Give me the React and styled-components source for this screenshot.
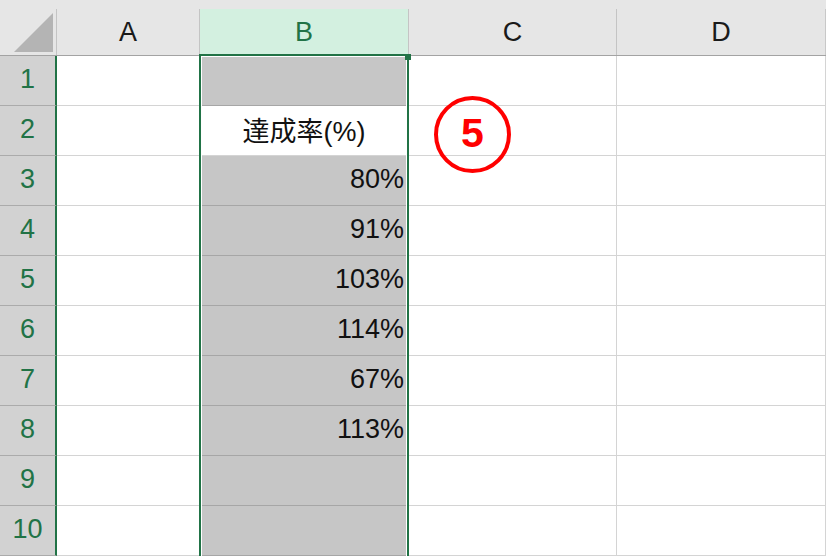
import styled, { createGlobalStyle } from "styled-components";

const GlobalStyle = createGlobalStyle`
    html, body{
        margin:0;
        padding:0;
        background:#ffffff;
    }
    body{
        font-family: "Liberation Sans", "Noto Sans CJK JP", sans-serif;
    }
`

const GREEN = "#217346";

const Sheet = styled.div`
    position:relative;
    width:826px;
    height:556px;
    overflow:hidden;
    display:grid;
    grid-template-columns: 57px 143px 209px 208px 209px;
    grid-template-rows: 56px repeat(10, 50px);
    background:#ffffff;
`

const HeaderCell = styled.div`
    box-sizing:border-box;
    padding-top:9px;
    background:#e6e6e6;
    border-bottom:1px solid #a3a3a3;
`

const HeaderLabel = styled.div`
    box-sizing:border-box;
    height:100%;
    display:flex;
    align-items:center;
    justify-content:center;
    background:${p => p.$active ? "#d3f0e0" : "#e6e6e6"};
    color:${p => p.$active ? GREEN : "#1a1a1a"};
    border-right:1px solid ${p => p.$last ? "#c8c8c8" : "#c4c4c4"};
    font-size:27px;
`

const Corner = styled.svg`
    display:block;
    width:56px;
    height:46px;
    border-right:1px solid #c4c4c4;
`

const RowHead = styled.div`
    box-sizing:border-box;
    display:flex;
    align-items:center;
    justify-content:center;
    background:#d2d2d2;
    color:${GREEN};
    border-bottom:1px solid #ababab;
    border-right:2px solid ${GREEN};
    font-size:27px;
    padding-bottom:2px;
`

const Cell = styled.div`
    box-sizing:border-box;
    display:flex;
    align-items:center;
    justify-content:${p => p.$center ? "center" : "flex-end"};
    padding:0 4px 3px 0;
    background:${p => p.$selected ? "#c6c6c6" : "#ffffff"};
    border-right:1px solid #d4d4d4;
    border-bottom:1px solid ${p => p.$selected ? "#a6a6a6" : "#d4d4d4"};
    color:#111111;
    font-size:27px;
    ${p => p.$center ? "padding-right:0;" : ""}
`

const Selection = styled.div`
    position:absolute;
    left:199px;
    top:54px;
    width:210px;
    height:510px;
    box-sizing:border-box;
    border:2px solid ${GREEN};
    box-shadow: inset 0 0 0 1px #ffffff;
    pointer-events:none;
`

const Handle = styled.div`
    position:absolute;
    right:-4px;
    top:-2px;
    width:6px;
    height:6px;
    background:${GREEN};
`

const Badge = styled.div`
    position:absolute;
    left:434px;
    top:96px;
    width:77px;
    height:77px;
    box-sizing:border-box;
    border:4px solid #ff0000;
    border-radius:50%;
    display:flex;
    align-items:center;
    justify-content:center;
    color:#ff0000;
    font-family:"Liberation Sans", sans-serif;
    font-weight:bold;
    font-size:41px;
    padding-bottom:2px;
`

const columns = ["A", "B", "C", "D"];
const values = ["", "達成率(%)", "80%", "91%", "103%", "114%", "67%", "113%", "", ""];

function App(){
    return(
        <>
            <GlobalStyle/>
            <Sheet>
                <HeaderCell>
                    <Corner viewBox="0 0 56 46">
                        <polygon points="14,43 53,43 53,4" fill="#b4b4b4"/>
                    </Corner>
                </HeaderCell>
                {columns.map((c, i) => (
                    <HeaderCell key={c}>
                        <HeaderLabel $active={c === "B"} $last={i === columns.length - 1}>{c}</HeaderLabel>
                    </HeaderCell>
                ))}

                {values.map((v, i) => (
                    <Row key={i} num={i + 1} value={v}/>
                ))}

                <Selection><Handle/></Selection>
                <Badge>5</Badge>
            </Sheet>
        </>
    );
}

function Row({num, value}){
    const active = num === 2;
    return(
        <>
            <RowHead>{num}</RowHead>
            <Cell/>
            <Cell $selected={!active} $center={active}>{value}</Cell>
            <Cell/>
            <Cell/>
        </>
    );
}

export default App;
